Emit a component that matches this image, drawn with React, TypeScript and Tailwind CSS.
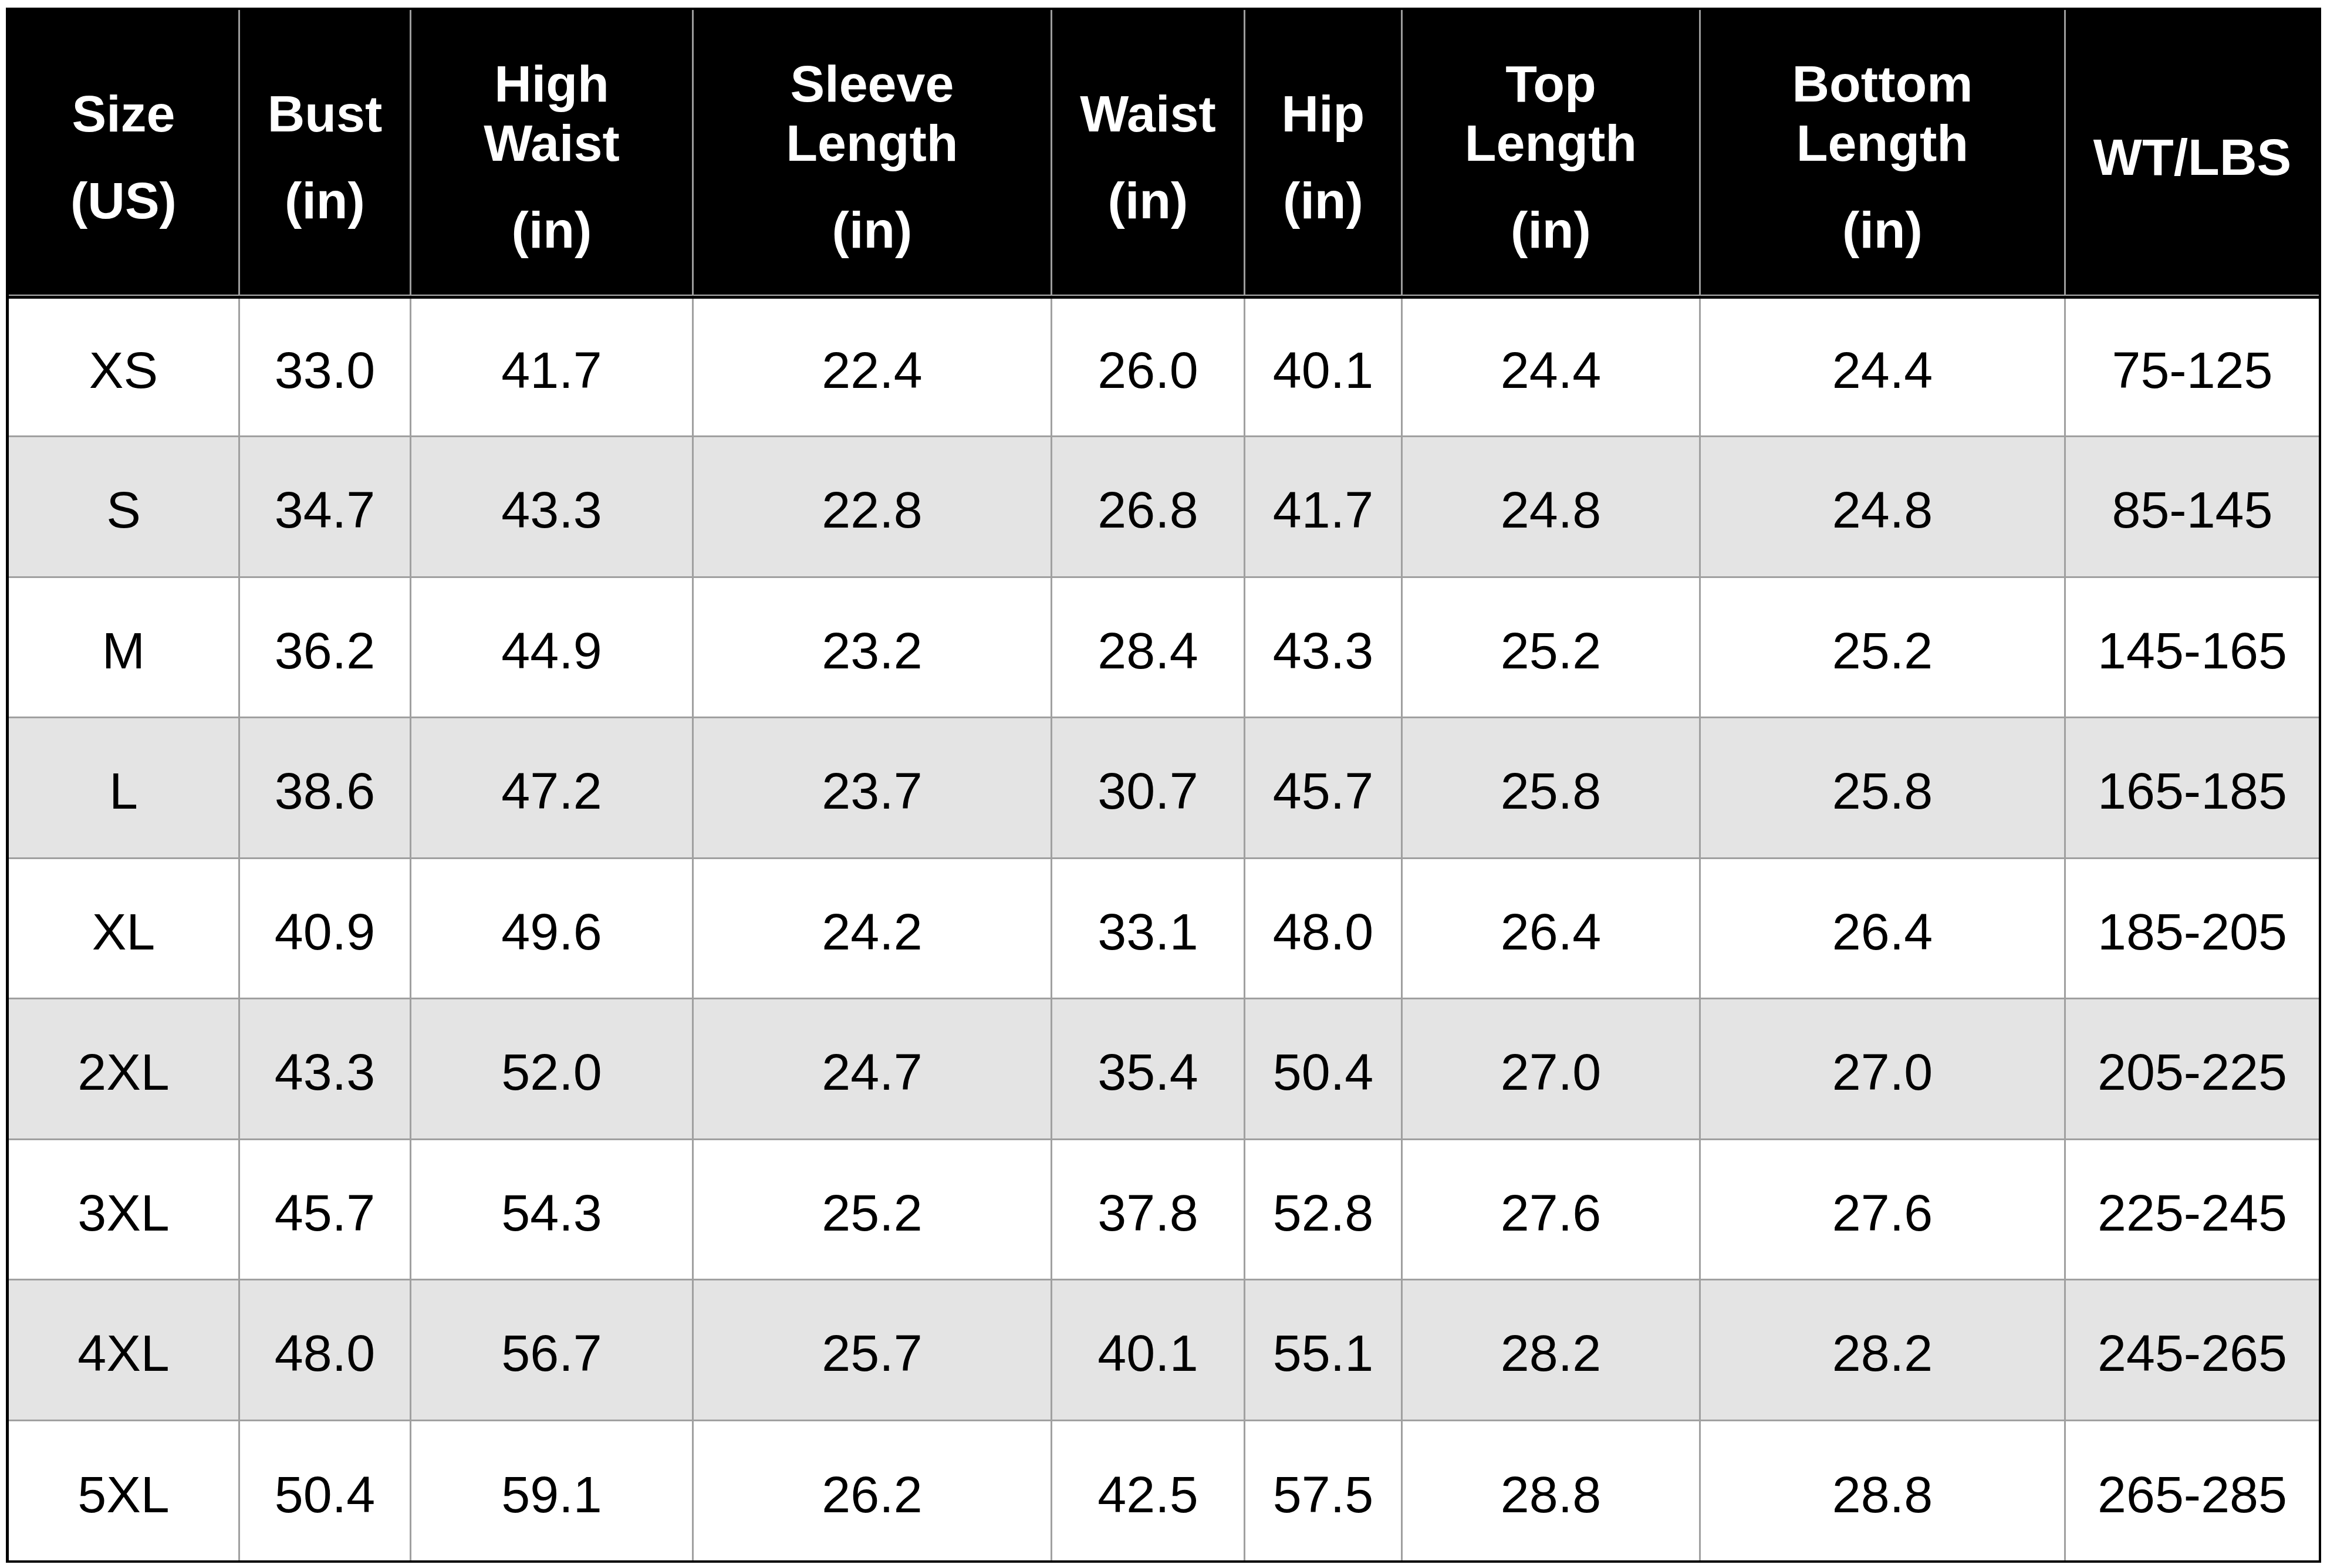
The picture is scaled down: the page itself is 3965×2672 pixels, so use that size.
const headers: { name: string[]; unit?: string }[] = [
  { name: ['Size'], unit: '(US)' },
  { name: ['Bust'], unit: '(in)' },
  { name: ['High', 'Waist'], unit: '(in)' },
  { name: ['Sleeve', 'Length'], unit: '(in)' },
  { name: ['Waist'], unit: '(in)' },
  { name: ['Hip'], unit: '(in)' },
  { name: ['Top', 'Length'], unit: '(in)' },
  { name: ['Bottom', 'Length'], unit: '(in)' },
  { name: ['WT/LBS'] },
];

const rows: string[][] = [
  ['XS', '33.0', '41.7', '22.4', '26.0', '40.1', '24.4', '24.4', '75-125'],
  ['S', '34.7', '43.3', '22.8', '26.8', '41.7', '24.8', '24.8', '85-145'],
  ['M', '36.2', '44.9', '23.2', '28.4', '43.3', '25.2', '25.2', '145-165'],
  ['L', '38.6', '47.2', '23.7', '30.7', '45.7', '25.8', '25.8', '165-185'],
  ['XL', '40.9', '49.6', '24.2', '33.1', '48.0', '26.4', '26.4', '185-205'],
  ['2XL', '43.3', '52.0', '24.7', '35.4', '50.4', '27.0', '27.0', '205-225'],
  ['3XL', '45.7', '54.3', '25.2', '37.8', '52.8', '27.6', '27.6', '225-245'],
  ['4XL', '48.0', '56.7', '25.7', '40.1', '55.1', '28.2', '28.2', '245-265'],
  ['5XL', '50.4', '59.1', '26.2', '42.5', '57.5', '28.8', '28.8', '265-285'],
];

// first row sits a bit shorter under the header bar, last one closes on the outer border
function rowHeight(r: number) {
  if (r === 0) return 'h-[236px] pt-[10px]';
  if (r === rows.length - 1) return 'h-[237px] pt-[14px]';
  return 'h-[239.5px] pt-[12px]';
}

export default function App() {
  return (
    <div className="min-h-screen bg-white pt-[13px] pl-[10px] font-['Liberation_Sans',Arial,sans-serif]">
      <div className="w-[3945px] border-4 border-l-[5px] border-black">
        <div className="grid grid-cols-[394px_292px_481px_611px_329px_268px_508px_622px_1fr]">
          {/* header */}
          {headers.map((h, i) => (
            <div
              key={h.name.join(' ')}
              className={`flex h-[487px] flex-col items-center justify-center border-b-2 border-[#b4b4b4] bg-black pt-[15px] text-center text-[88px] font-bold text-white ${
                i < headers.length - 1 ? 'border-r-[3px] border-r-[#9c9c9c]' : ''
              }`}
            >
              {h.name.map((line) => (
                <div key={line} className="leading-[101px]">
                  {line}
                </div>
              ))}
              {h.unit && <div className="mt-[47px] leading-[101px]">{h.unit}</div>}
            </div>
          ))}
          <div className="col-span-9 h-[5px] bg-black" />

          {/* body */}
          {rows.map((row, r) =>
            row.map((cell, c) => (
              <div
                key={`${r}-${c}`}
                className={`flex items-center justify-center text-[88px] leading-none text-black ${rowHeight(r)} ${
                  r % 2 === 1 ? 'bg-[#e4e4e4]' : 'bg-white'
                } ${c < row.length - 1 ? 'border-r-[3px] border-r-[#a0a0a0]' : ''} ${
                  r < rows.length - 1 ? 'border-b-[3px] border-b-[#a0a0a0]' : ''
                }`}
              >
                {cell}
              </div>
            ))
          )}
        </div>
      </div>
    </div>
  );
}
